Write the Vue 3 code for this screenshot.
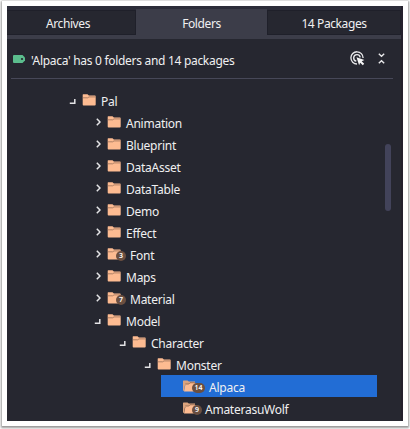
<script setup>
const rows = [
  { name: 'Pal', level: 0, open: true },
  { name: 'Animation', level: 1 },
  { name: 'Blueprint', level: 1 },
  { name: 'DataAsset', level: 1 },
  { name: 'DataTable', level: 1 },
  { name: 'Demo', level: 1 },
  { name: 'Effect', level: 1 },
  { name: 'Font', level: 1, count: 3 },
  { name: 'Maps', level: 1 },
  { name: 'Material', level: 1, count: 7 },
  { name: 'Model', level: 1, open: true },
  { name: 'Character', level: 2, open: true },
  { name: 'Monster', level: 3, open: true },
  { name: 'Alpaca', level: 4, count: 14, leaf: true, selected: true },
  { name: 'AmaterasuWolf', level: 4, count: 9, leaf: true },
]
</script>

<template>
  <div class="frame">
    <div class="window">
      <nav class="tabs">
        <div class="tab first">Archives</div>
        <div class="tab active">Folders</div>
        <div class="tab last">14 Packages</div>
      </nav>
      <div class="bar"></div>
      <header class="info">
        <svg class="tag" width="12" height="8" viewBox="0 0 12 8">
          <path d="M1 0H9.5L12 2.5V5.5L9.5 8H1Q0 8 0 7V1Q0 0 1 0Z" fill="#5bbd8d" />
          <circle cx="9" cy="4" r="1.1" fill="#25262f" />
        </svg>
        <span class="summary">'Alpaca' has 0 folders and 14 packages</span>
        <svg class="target" width="15" height="15" viewBox="0 0 15 15" fill="none" stroke="#e8e8ea" stroke-width="1.35">
          <path d="M7 13A6.1 6.1 0 1 1 13.1 7" />
          <path d="M6.3 10.2A3.3 3.3 0 1 1 10.2 6.3" />
          <path d="M6.5 6.2L14.4 9.1L11.7 10.2L14.2 12.8L12.8 14.2L10.2 11.7L9.1 14.2Z" fill="#f4f4f4" stroke="none" />
        </svg>
        <svg class="collapse" width="7" height="11" viewBox="0 0 7 11" fill="none" stroke="#e8e8ea" stroke-width="1.4">
          <path d="M.8 .8L3.5 3.3L6.2 .8M.8 10.2L3.5 7.7L6.2 10.2" />
        </svg>
      </header>
      <div class="body">
        <div class="tree">
          <div
            v-for="row in rows"
            :key="row.name"
            class="row"
            :class="['level' + row.level, { selected: row.selected }]"
          >
            <svg v-if="!row.leaf" class="arrow" width="8" height="10" viewBox="0 0 8 10" fill="none" stroke="#e4e4e6">
              <path v-if="row.open" d="M1.8 8.3H6.8V4" stroke-width="1.5" />
              <path v-else d="M3.8 1.7L7 5L3.8 8.3" stroke-width="1.5" />
            </svg>
            <span class="icon">
              <svg width="14" height="12" viewBox="0 0 14 12">
                <template v-if="row.leaf">
                  <path d="M0 1Q0 .4 .6 .4H4.5L5.8 1.6H12V5H2L1 11Q0 11 0 10Z" fill="#dba37d" />
                  <path d="M2.5 4.2H5.8L7 3H13.6L12 11.5H1Z" fill="#fdbb91" />
                  <path d="M2.3 4H5.8L7 2.8H12" fill="none" stroke="#71513f" stroke-width=".6" />
                </template>
                <template v-else>
                  <path d="M1.1 .3H5.5L6.9 1.6H13Q13.7 1.6 13.7 2.4V10.6Q13.7 11.5 12.8 11.5H1.5Q.7 11.5 .7 10.6V.9Q.7 .3 1.1 .3Z" fill="#fdbb91" />
                  <path d="M.7 3.8H5.7L7 2.9H13.7" fill="none" stroke="#8d6753" stroke-width=".7" />
                </template>
              </svg>
              <span v-if="row.count" class="badge" :class="{ wide: row.count > 9 }">{{ row.count }}</span>
            </span>
            <span class="name" :class="{ counted: row.count, wide: row.count > 9 }">{{ row.name }}</span>
          </div>
        </div>
        <div class="scroll"></div>
      </div>
    </div>
  </div>
</template>

<style>
body {
  margin: 0;
  background: #fff;
}
</style>

<style scoped>
.frame {
  box-sizing: border-box;
  width: 406px;
  height: 425px;
  margin: 1px 2px 3px;
  padding: 5px;
  background: #fff;
  box-shadow: 0 1px 2px 1px #999;
  font-family: "Noto Sans", "Open Sans", sans-serif;
  font-size: 12px;
  color: #f0f0f1;
}
.window {
  box-sizing: border-box;
  height: 415px;
  background: #262730;
  border-right: 2px solid #24202d;
  overflow: hidden;
}
.tabs {
  display: flex;
  align-items: flex-end;
  height: 29px;
  background: #2c2d39;
}
.tab {
  box-sizing: border-box;
  height: 25px;
  border: 1px solid #1f202a;
  background: #262730;
  text-align: center;
  line-height: 25px;
  letter-spacing: -.4px;
}
.first { width: 129px; padding-right: 6px; border-left: 0; padding-left: 0; }
.active {
  width: 131px;
  height: 26px;
  border: 0;
  background: #3c3d49;
  line-height: 29px;
}
.last { flex: 1; }
.bar {
  height: 4px;
  background: #3c3d49;
}
.info {
  display: flex;
  align-items: center;
  box-sizing: border-box;
  height: 40px;
  margin: 0 8px 0 4px;
  padding: 0 8px 0 2px;
  border-bottom: 1px solid #474858;
}
.summary {
  margin-left: 6px;
  padding-top: 3px;
  letter-spacing: -.3px;
  white-space: nowrap;
}
.target { margin-left: auto; }
.collapse { margin-left: 13px; }
.body {
  display: flex;
  justify-content: space-between;
  padding: 10px 10px 0 54px;
}
.tree { width: 316px; }
.row {
  display: flex;
  align-items: center;
  height: 22px;
}
.level0 { padding-left: 7px; }
.level1 { padding-left: 32px; }
.level2 { padding-left: 57px; }
.level3 { padding-left: 82px; }
.level4 { padding-left: 21px; margin-left: 100px; }
.selected { background: #226dd5; }
.arrow { margin-right: 6px; }
.icon {
  position: relative;
  width: 14px;
  height: 12px;
}
.icon svg { display: block; }
.badge {
  position: absolute;
  left: 9px;
  top: 3px;
  width: 10px;
  height: 10px;
  border-radius: 5px;
  background: #6b4f40;
  color: #fff;
  font-size: 7px;
  font-weight: 600;
  line-height: 10px;
  text-align: center;
}
.badge.wide { width: 13px; }
.name {
  margin-left: 5px;
  padding-top: 2px;
  letter-spacing: -.25px;
}
.name.counted { margin-left: 9px; }
.name.wide { margin-left: 13px; }
.level4 .icon { left: 1px; }
.scroll {
  width: 6px;
  height: 67px;
  margin-top: 55px;
  border-radius: 3px;
  background: #42435a;
}
</style>
